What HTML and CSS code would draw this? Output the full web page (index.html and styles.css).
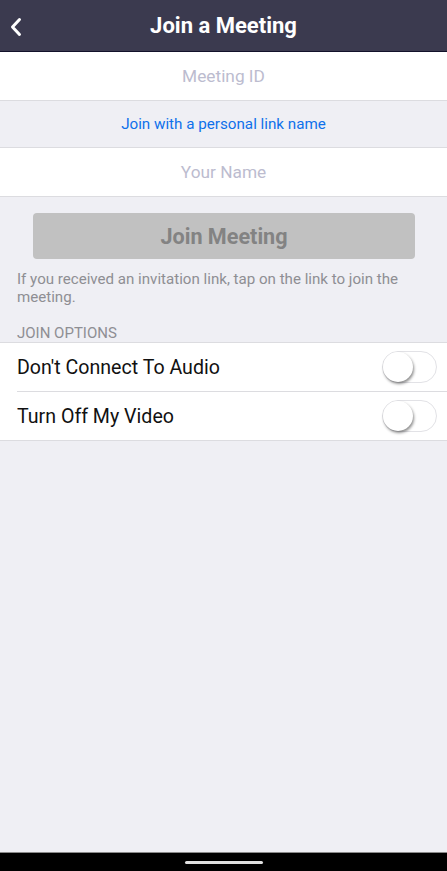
FILE: index.html
```html
<!DOCTYPE html>
<html lang="en">
<head>
    <meta charset="UTF-8">
    <meta name="viewport" content="width=device-width, initial-scale=1.0">
    <title>Join a Meeting</title>
    <link rel="stylesheet" href="styles.css">
</head>
<body>
    <div class="screen">
        <header class="topbar">
            <button class="back-btn" aria-label="Back">
                <svg width="14" height="20" viewBox="0 0 14 20">
                    <path d="M10.5 2.5 L3.5 10 L10.5 17.5" fill="none" stroke="#fff" stroke-width="3" stroke-linecap="round" stroke-linejoin="round"/>
                </svg>
            </button>
            <h1>Join a Meeting</h1>
        </header>

        <div class="field-row">Meeting ID</div>
        <div class="link-row">Join with a personal link name</div>
        <div class="field-row">Your Name</div>

        <div class="join-wrap">
            <button class="join-btn" disabled>Join Meeting</button>
        </div>
        <p class="hint">If you received an invitation link, tap on the link to join the meeting.</p>

        <div class="section-label">JOIN OPTIONS</div>
        <div class="options">
            <div class="option">
                <span>Don't Connect To Audio</span>
                <span class="toggle"><span class="knob"></span></span>
            </div>
            <div class="option">
                <span>Turn Off My Video</span>
                <span class="toggle"><span class="knob"></span></span>
            </div>
        </div>

        <div class="spacer"></div>
        <div class="navbar"><span class="pill"></span></div>
    </div>
</body>
</html>
```

FILE: styles.css
```css
/* Join screen */
body {
    margin: 0;
    font-family: Roboto, 'Noto Sans', sans-serif;
    background-color: #efeff4;
}

.screen {
    display: flex;
    flex-direction: column;
    height: 871px;
}

.topbar {
    height: 51px;
    background-color: #3b3a4f;
    border-bottom: 1px solid #12112a;
    display: flex;
    align-items: center;
    justify-content: center;
    position: relative;
    flex-shrink: 0;
}

.back-btn {
    position: absolute;
    left: 9px;
    top: 17px;
    padding: 0;
    border: none;
    background: none;
    line-height: 0;
}

.topbar h1 {
    margin: 0;
    color: #fff;
    font-size: 22px;
    font-weight: 700;
}

.field-row {
    height: 48px;
    background-color: #fff;
    border-bottom: 1px solid #dcdce0;
    display: flex;
    align-items: center;
    justify-content: center;
    color: #bcbccf;
    font-size: 17.3px;
    flex-shrink: 0;
}

.link-row {
    height: 46px;
    border-bottom: 1px solid #dcdce0;
    display: flex;
    align-items: center;
    justify-content: center;
    color: #0e71eb;
    font-size: 15.2px;
    flex-shrink: 0;
}

.join-wrap {
    padding: 16px 32px 0 33px;
}

.join-btn {
    width: 100%;
    height: 46px;
    border: none;
    border-radius: 4px;
    background-color: #c1c1c1;
    color: #838383;
    font-family: inherit;
    font-size: 21.6px;
    font-weight: 700;
}

.hint {
    margin: 11px 17px 0;
    color: #8e8e93;
    font-size: 15.1px;
    line-height: 18px;
}

.section-label {
    margin: 18px 17px 0;
    height: 18px;
    color: #8e8e93;
    font-size: 15px;
}

.options {
    background-color: #fff;
    border-top: 1px solid #dcdce0;
    border-bottom: 1px solid #dcdce0;
}

.option {
    height: 48px;
    margin-left: 17px;
    padding-right: 10px;
    display: flex;
    align-items: center;
    justify-content: space-between;
    font-size: 19.6px;
    color: #111;
}

.option + .option {
    border-top: 1px solid #dcdce0;
}

.toggle {
    width: 55px;
    height: 32px;
    border: 1px solid #e2e2e6;
    border-radius: 17px;
    box-sizing: border-box;
    position: relative;
    background-color: #fff;
}

.knob {
    position: absolute;
    left: 0;
    top: 0;
    width: 30px;
    height: 30px;
    border-radius: 50%;
    background-color: #fff;
    box-shadow: 1px 2px 3px rgba(0, 0, 0, 0.45);
}

.spacer {
    flex: 1;
}

.navbar {
    height: 18px;
    background-color: #000;
    border-top: 1px solid #8a8a8a;
    display: flex;
    justify-content: center;
    align-items: center;
    flex-shrink: 0;
}

.pill {
    width: 78px;
    height: 3px;
    border-radius: 2px;
    background-color: #e0e0e0;
}
```
